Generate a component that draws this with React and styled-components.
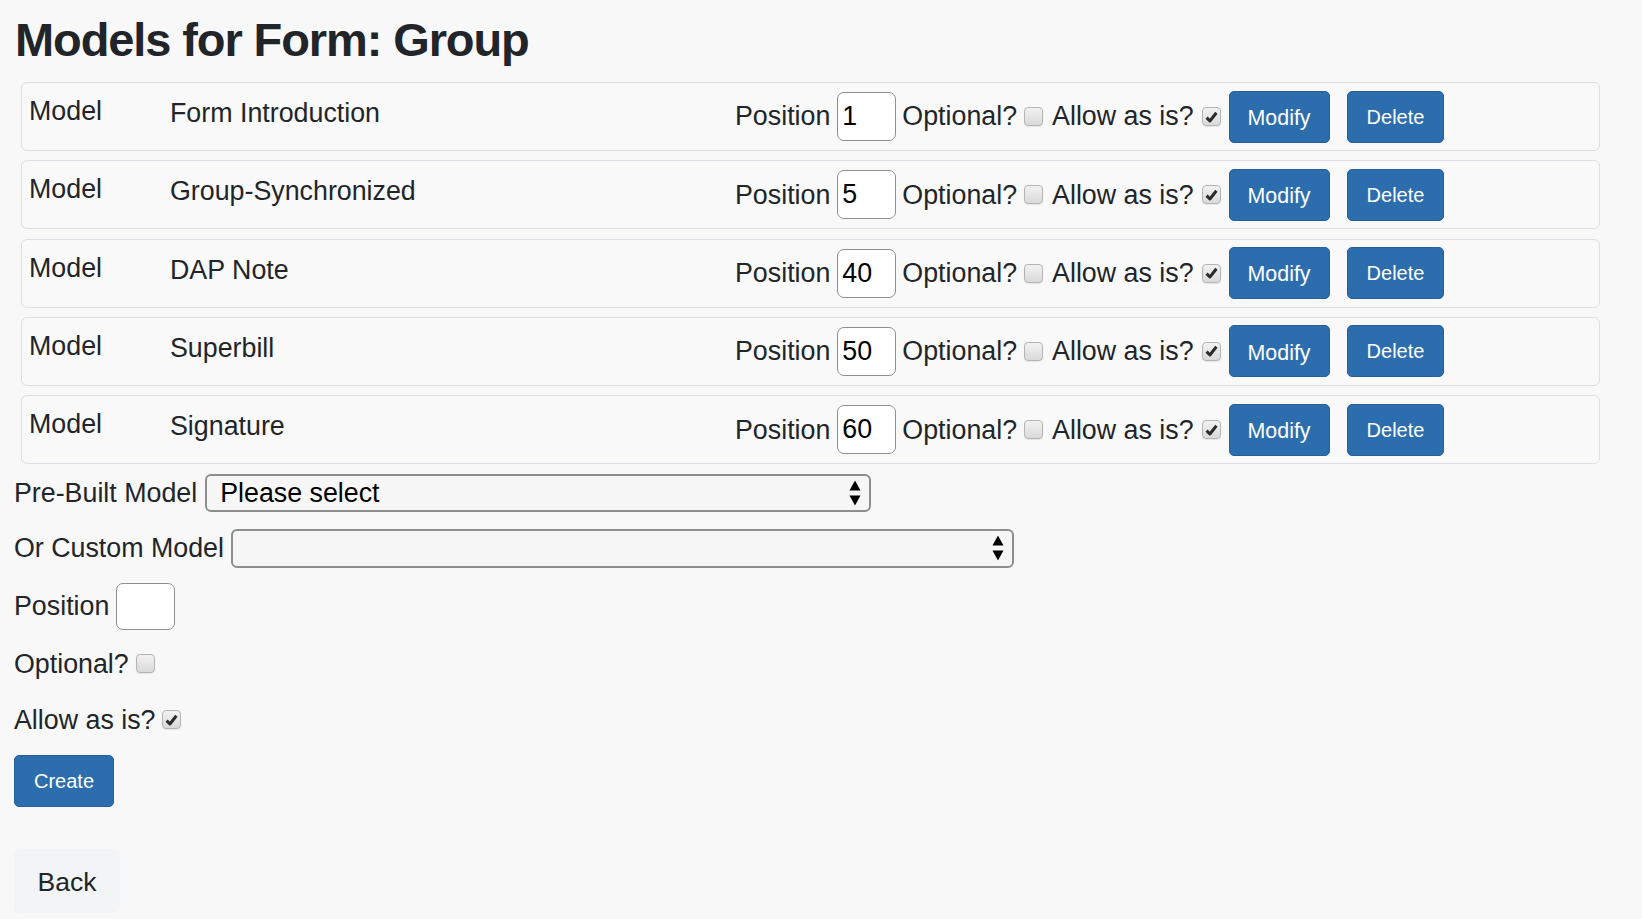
import React from "react";
import styled, { createGlobalStyle } from "styled-components";

const GlobalStyle = createGlobalStyle`
  body {
    margin: 0;
    background: #f8f8f8;
    color: #212529;
    font-family: "Liberation Sans", Arial, sans-serif;
  }
`;

const Page = styled.div`
  padding: 13px 14px 0 14px;
  font-size: 26.8px;
  line-height: 1.5;
`;

const Title = styled.h1`
  margin: 0 0 15px 1px;
  font-size: 47px;
  font-weight: 700;
  line-height: 54px;
  letter-spacing: -1.1px;
`;

const CardList = styled.div`
  display: flex;
  flex-direction: column;
  gap: 9.3px;
  margin: 0 0 9px 7px;
  width: 1579px;
`;

const Card = styled.div`
  display: grid;
  grid-template-columns: 141px 565px auto;
  align-items: center;
  box-sizing: border-box;
  height: 69px;
  padding: 0 7px;
  border: 1.5px solid #dcdfe3;
  border-radius: 6px;
  background: #f9f9f9;
`;

const ModelLabel = styled.div`
  align-self: start;
  margin-top: 1px;
  padding-top: 7px;
`;

const ModelName = styled.div`
  align-self: start;
  margin-top: 3px;
  padding-top: 7px;
`;

const Controls = styled.div`
  display: flex;
  align-items: center;
`;

const Label = styled.span`
  margin-right: ${(p) => p.$gap ?? 7}px;
  white-space: nowrap;
`;

const NumberInput = styled.input`
  box-sizing: border-box;
  width: 59px;
  height: ${(p) => p.$h || 49}px;
  margin-right: 6px;
  padding: 0 4px;
  border: 1.5px solid #8f8f8f;
  border-radius: 7px;
  background: #fff;
  color: #000;
  font: inherit;
  font-size: 26.8px;
  outline: none;
`;

const Box = styled.span`
  display: inline-flex;
  align-items: center;
  justify-content: center;
  box-sizing: border-box;
  width: 19px;
  height: 19px;
  margin-right: ${(p) => p.$gap ?? 0}px;
  border: 1px solid #b4b4b4;
  border-radius: 4px;
  background: linear-gradient(#f2f2f2, #dadada);
  box-shadow: 0 1px 1px rgba(0, 0, 0, 0.08);
  flex-shrink: 0;
`;

const Checkbox = ({ checked, gap }) => (
  <Box $gap={gap} role="checkbox" aria-checked={checked}>
    {checked && (
      <svg width="13" height="12" viewBox="0 0 13 12">
        <path d="M1.6 6.6 L4.9 10 L11.4 1.8" fill="none" stroke="#2b2b2b" strokeWidth="3" strokeLinejoin="round" />
      </svg>
    )}
  </Box>
);

const Button = styled.button`
  box-sizing: border-box;
  height: 52px;
  padding: 0 ${(p) => p.$pad || 18}px;
  margin-left: ${(p) => p.$ml || 0}px;
  border: 1px solid #285f98;
  border-radius: 5px;
  background: #2c6ead;
  color: #fff;
  font-family: "Liberation Sans", Arial, sans-serif;
  font-size: ${(p) => p.$fs || 20}px;
  line-height: 1;
  padding-top: ${(p) => p.$pt || 0}px;
  cursor: pointer;
`;

const FormRow = styled.div`
  display: flex;
  align-items: center;
  margin-top: ${(p) => p.$mt || 0}px;
`;

const SelectWrap = styled.div`
  position: relative;
  width: ${(p) => p.$w}px;
`;

const Select = styled.select`
  box-sizing: border-box;
  width: 100%;
  height: ${(p) => p.$h || 38}px;
  padding: 0 30px 0 13px;
  border: 2px solid #8e8e8e;
  border-radius: 6px;
  background: #f7f7f7;
  color: #000;
  font-family: "Liberation Sans", Arial, sans-serif;
  font-size: 26.8px;
  appearance: none;
  -webkit-appearance: none;
  outline: none;
`;

const Arrows = styled.svg`
  position: absolute;
  right: 10px;
  top: 50%;
  transform: translateY(-50%);
  pointer-events: none;
`;

const SelectField = ({ width, height, value }) => (
  <SelectWrap $w={width}>
    <Select $h={height} defaultValue={value}>
      <option value={value}>{value}</option>
    </Select>
    <Arrows width="12" height="25" viewBox="0 0 12 25">
      <path d="M6 0 L11.5 10 L0.5 10 Z" fill="#000" />
      <path d="M0.5 15 L11.5 15 L6 25 Z" fill="#000" />
    </Arrows>
  </SelectWrap>
);

const BackButton = styled.button`
  display: block;
  box-sizing: border-box;
  width: 106px;
  height: 64px;
  margin-top: 42px;
  border: none;
  border-radius: 6px;
  background: #f3f4f6;
  color: #212529;
  font-family: "Liberation Sans", Arial, sans-serif;
  font-size: 26.5px;
  padding: 4px 0 0;
  cursor: pointer;
`;

const models = [
  { name: "Form Introduction", position: "1" },
  { name: "Group-Synchronized", position: "5" },
  { name: "DAP Note", position: "40" },
  { name: "Superbill", position: "50" },
  { name: "Signature", position: "60" },
];

export default function App() {
  return (
    <>
      <GlobalStyle />
      <Page>
        <Title>Models for Form: Group</Title>
        <CardList>
          {models.map((m) => (
            <Card key={m.name}>
              <ModelLabel>Model</ModelLabel>
              <ModelName>{m.name}</ModelName>
              <Controls>
                <Label>Position</Label>
                <NumberInput defaultValue={m.position} />
                <Label $gap={7}>Optional?</Label>
                <Checkbox gap={9} />
                <Label $gap={8}>Allow as is?</Label>
                <Checkbox checked gap={8} />
                <Button $fs={21.4} $pad={18} $pt={4}>Modify</Button>
                <Button $fs={20} $pad={19} $ml={17}>Delete</Button>
              </Controls>
            </Card>
          ))}
        </CardList>

        <FormRow>
          <Label $gap={8}>Pre-Built Model</Label>
          <SelectField width={666} height={38} value="Please select" />
        </FormRow>
        <FormRow $mt={15}>
          <Label $gap={7}>Or Custom Model</Label>
          <SelectField width={783} height={39} value="" />
        </FormRow>
        <FormRow $mt={14}>
          <Label $gap={7}>Position</Label>
          <NumberInput $h={47} />
        </FormRow>
        <FormRow $mt={14}>
          <Label $gap={7}>Optional?</Label>
          <Checkbox />
        </FormRow>
        <FormRow $mt={16}>
          <Label $gap={7}>Allow as is?</Label>
          <Checkbox checked />
        </FormRow>
        <FormRow $mt={15}>
          <Button $fs={20} $pad={19}>Create</Button>
        </FormRow>
        <BackButton>Back</BackButton>
      </Page>
    </>
  );
}
